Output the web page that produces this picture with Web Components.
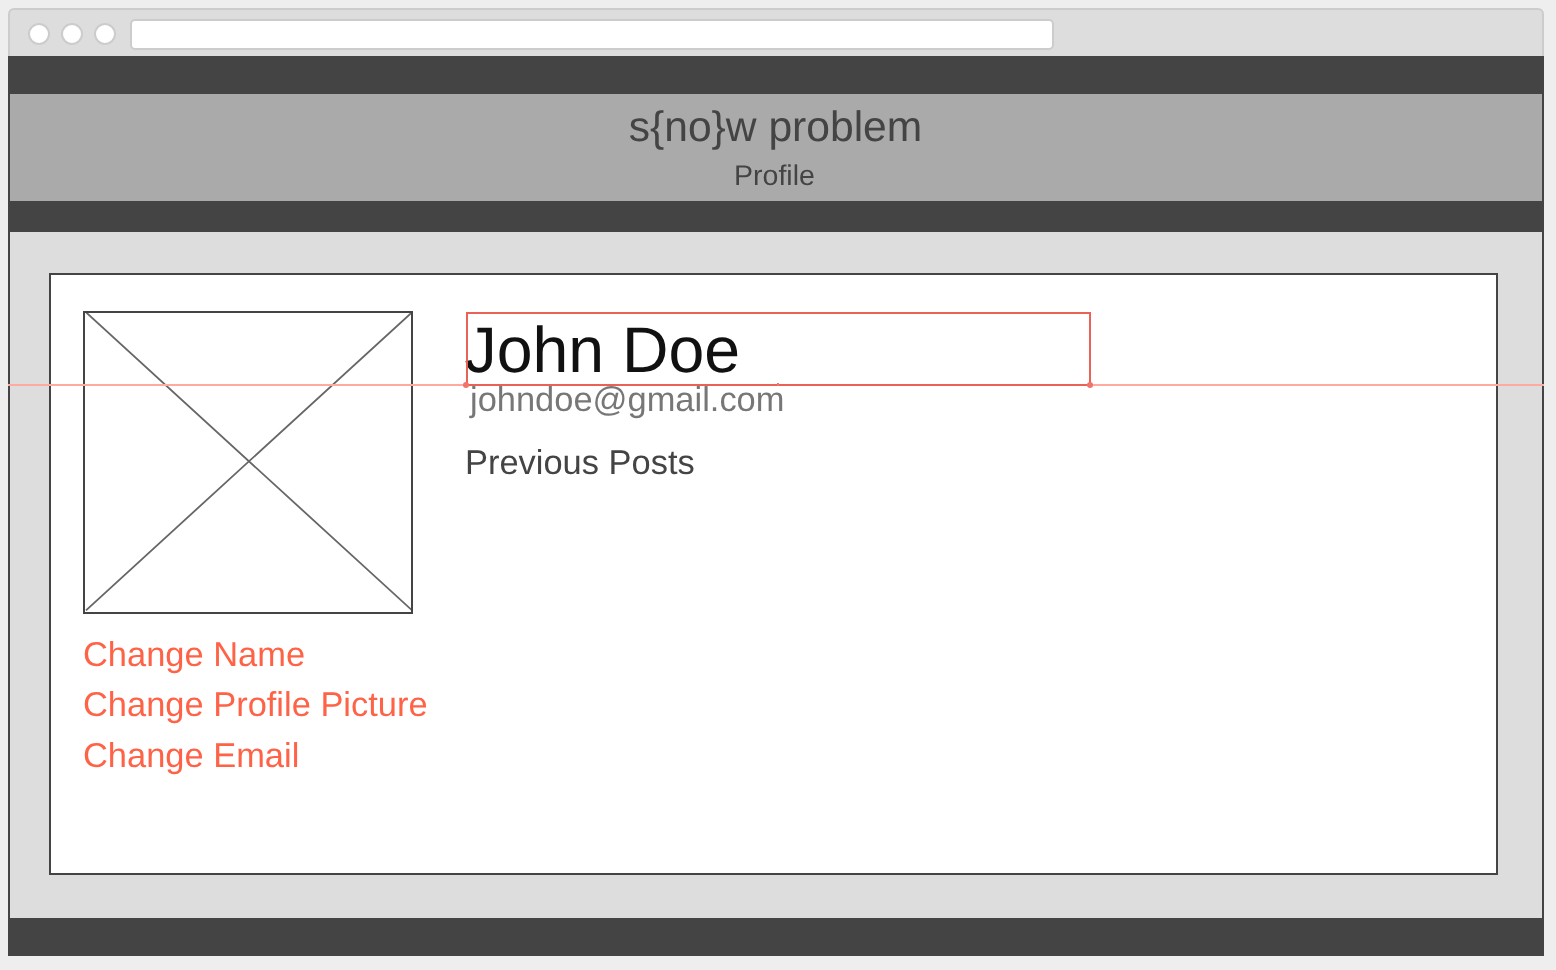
<!DOCTYPE html>
<html><head><meta charset="utf-8">
<style>
html,body{margin:0;padding:0;background:#eee;height:100%;overflow:hidden}
body{font-family:"Liberation Sans",Arial,sans-serif;padding:8px 12px 14px 8px;box-sizing:border-box;height:970px;text-rendering:geometricPrecision}
</style></head><body>
<browser-frame>
  <site-header slot="head" title-text="s{no}w problem" sub="Profile"></site-header>
  <profile-card></profile-card>
</browser-frame>
<script>
function def(name,html,init){customElements.define(name,class extends HTMLElement{constructor(){super();this.attachShadow({mode:'open'}).innerHTML=html;}connectedCallback(){if(init)init(this);}});}
def('browser-frame',`<style>
:host{display:flex;flex-direction:column;width:1536px;height:948px;position:relative;font-family:"Liberation Sans",Arial,sans-serif}
.chrome{height:48px;box-sizing:border-box;background:#ddd;border:2px solid #ccc;border-bottom:0;border-radius:6px 6px 0 0;display:flex;align-items:flex-start;padding:9px 0 0 18px;flex:none}
.dot{width:18px;height:18px;border:2px solid #ccc;border-radius:50%;background:#fff;margin:4px 11px 0 0;flex:none}
.url{width:924px;height:31px;box-sizing:border-box;background:#fff;border:2px solid #ccc;border-radius:5px;margin-left:3px;flex:none}
.body{flex:1;display:flex;flex-direction:column;border:solid #444;border-width:0 2px;min-height:0}
.top{height:38px;background:#444;flex:none}
.main{flex:1;background:#ddd;padding:41px 44px 43px 39px;min-height:0;display:flex}
.foot{height:38px;background:#444;flex:none}
.guide{position:absolute;left:0;right:0;top:376px;height:2px;background:#ffaa9f}
.sel{position:absolute;left:457.5px;top:304px;width:625.5px;height:74px;box-sizing:border-box;border:2px solid #ea6155}
.h{position:absolute;width:6px;height:6px;border-radius:50%;background:#f2736a;top:374px}
.t{position:absolute;left:769px;top:375px;width:2px;height:3px;background:#f2736a}
</style>
<div class="chrome"><span class="dot"></span><span class="dot"></span><span class="dot"></span><span class="url"></span></div>
<div class="body"><div class="top"></div><slot name="head"></slot><div class="main"><slot></slot></div><div class="foot"></div></div>
<div class="guide"></div><div class="sel"></div><div class="h" style="left:455px"></div><div class="h" style="left:1079px"></div><div class="t"></div>`);
def('site-header',`<style>
:host{display:block;flex:none;height:138px;background:#444;color:#444;text-align:center;font-family:"Liberation Sans",Arial,sans-serif}
.g{height:107px;background:#aaa;overflow:hidden}
h1{margin:10px 0 0 -1px;font-size:42.6px;font-weight:400;line-height:46px;will-change:opacity}
p{margin:8px 0 0 -3px;font-size:28.5px;line-height:36px;will-change:opacity}
</style><div class="g"><h1></h1><p></p></div>`,el=>{el.shadowRoot.querySelector('h1').textContent=el.getAttribute('title-text');el.shadowRoot.querySelector('p').textContent=el.getAttribute('sub');});
def('placeholder-image',`<style>:host{display:block;width:330px;height:303px;box-sizing:border-box;border:2px solid #444;background:#fff}svg{display:block;width:100%;height:100%;overflow:hidden}</style>
<svg viewBox="0 0 326 299" preserveAspectRatio="none"><path d="M1 -.7L327 297.3M327 -.7L1 297.3" stroke="#666" stroke-width="1.8" fill="none"/></svg>`);
def('action-link',`<style>:host{display:block;color:#ff6347;font-size:34.45px;line-height:50.4px;white-space:nowrap;font-family:"Liberation Sans",Arial,sans-serif;will-change:opacity}</style><slot></slot>`);
def('profile-card',`<style>
:host{display:flex;flex:1;box-sizing:border-box;background:#fff;border:2px solid #444;padding:36px 32px 0 32px;gap:52px;font-family:"Liberation Sans",Arial,sans-serif}
.left{width:330px;flex:none}
.links{margin-top:16px}
.right{flex:1;padding-top:0}
h2{margin:7px 0 0 -.5px;font-size:64.4px;font-weight:400;line-height:64px;color:#111;will-change:opacity}
.mail{margin:-2px 0 0 5px;font-size:34.45px;line-height:40px;color:#777;will-change:opacity}
.prev{margin:23px 0 0;font-size:34.45px;line-height:40px;color:#444;will-change:opacity}
</style>
<div class="left"><placeholder-image></placeholder-image><div class="links"><action-link>Change Name</action-link><action-link>Change Profile Picture</action-link><action-link>Change Email</action-link></div></div>
<div class="right"><h2>John Doe</h2><p class="mail">johndoe@gmail.com</p><p class="prev">Previous Posts</p></div>`);
</script>
</body></html>
